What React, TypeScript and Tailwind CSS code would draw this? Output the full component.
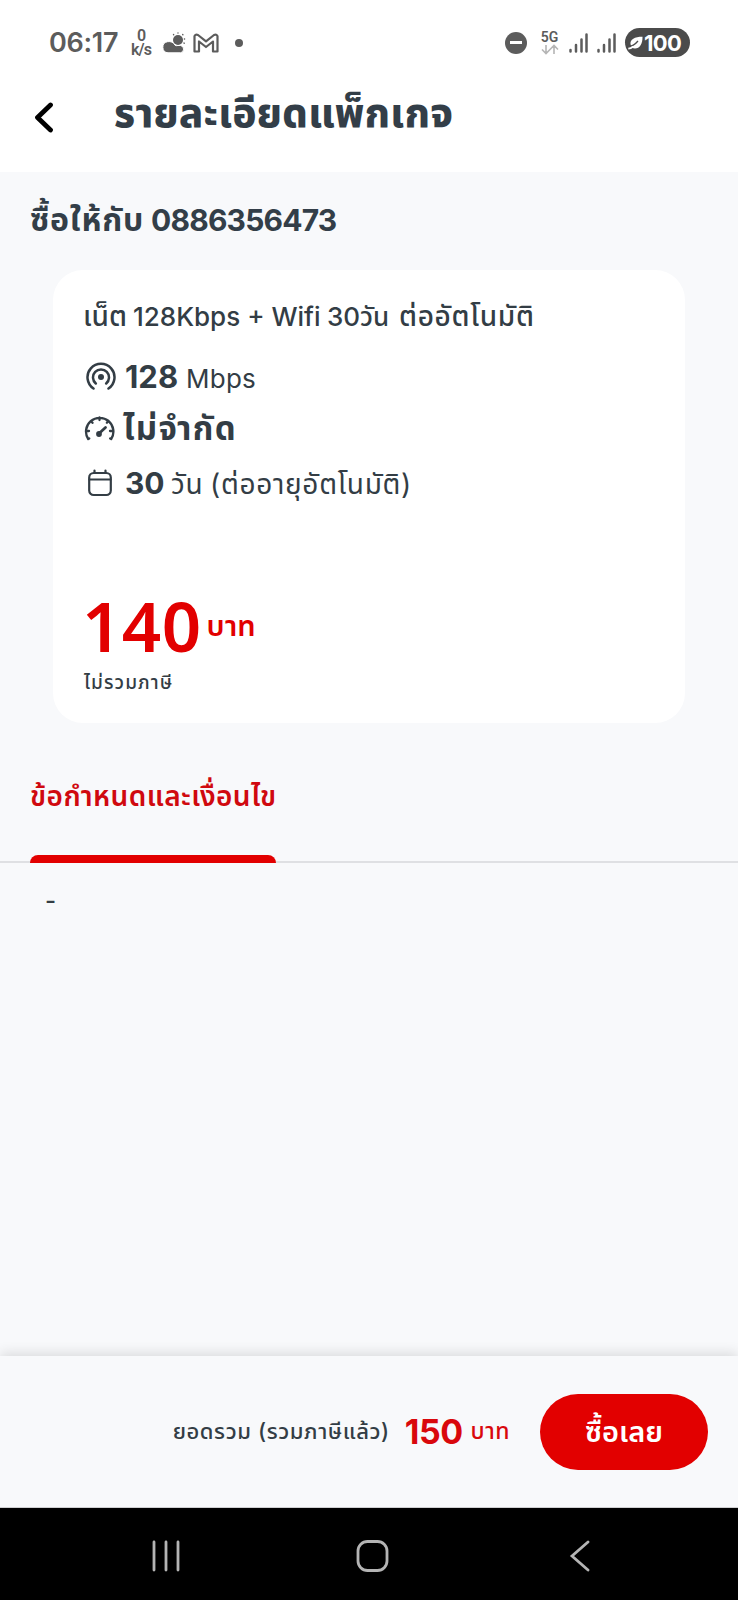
import React from "react";

function StatusBar() {
  return (
    <div className="flex h-[85px] items-center justify-between pl-[49px] pr-[48px] text-[#5c5c5c]">
      <div className="flex items-center">
        <span className="w-[69px] whitespace-nowrap text-[27px] font-semibold leading-[26px] tracking-[-0.3px]">06:17</span>
        <span className="ml-[13px] flex w-5 flex-col items-center font-['Roboto'] text-[16px] font-semibold leading-[14px] tracking-[-0.9px]">
          <span>0</span>
          <span>k/s</span>
        </span>
        <svg className="ml-[11px]" width="24" height="22" viewBox="0 0 24 22">
          <circle cx="16" cy="8" r="5" fill="#5c5c5c" />
          <g stroke="#5c5c5c" strokeWidth="1.400" strokeLinecap="round">
            <path d="M16 .9v.2M11.500 2.500l.2.2M20.700 2.500l.2.2M22.400 7h.2M22 11l.2.2" />
          </g>
          <path d="M6 20.800a5.600 5.600 0 0 1-.5-11.100a7 6.500 0 0 1 7.500 3.500q1 .8 3 .3h2.500a3.700 3.700 0 0 1 0 7.300z" fill="#5c5c5c" stroke="#fff" strokeWidth="1" />
        </svg>
        <svg className="ml-[7px]" width="26" height="20" viewBox="0 0 26 20" fill="none" stroke="#5c5c5c" strokeWidth="2.200" strokeLinejoin="round">
          <path d="M1.500 18.500V3.200Q2.500.8 5 2l8 6.300L21 2q2.500-1.200 3.500 1.200v15.300h-4.500V8.500l-7 5.500-7-5.500v10H1.500z" />
        </svg>
        <span className="ml-[16px] h-[8px] w-[8px] rounded-full bg-[#5c5c5c]" />
      </div>
      <div className="flex items-center">
        <span className="flex h-[22px] w-[22px] items-center justify-center rounded-full bg-[#5c5c5c]">
          <span className="h-[3px] w-[12px] bg-white" />
        </span>
        <div className="ml-[13px] flex w-[19px] flex-col items-center">
          <span className="font-['Roboto'] text-[14px] font-semibold leading-[13px]">5G</span>
          <svg width="18" height="11" viewBox="0 0 18 11" fill="none" stroke="#b5b5b5" strokeWidth="1.600">
            <path d="M5 1v8.500M1 5.500l4 4 4-4M13 10V1.500M9 5.500l4-4 4 4" />
          </svg>
        </div>
        <Signal className="ml-[10px]" />
        <Signal className="ml-[9px]" />
        <div className="ml-[9px] flex h-[29px] w-[65px] items-center rounded-full bg-[#4b4b4b] pl-[3px] text-white">
          <svg width="15" height="14" viewBox="0 0 15 14">
            <path d="M2.500 8C2 3.500 6.500.8 14.500.8 14.800 8 11.500 12.500 7 12.500 4.500 12.500 3 11 2.500 8z" fill="#fff" />
            <path d="M0 11C3.500 10.500 7 8.500 10 5" stroke="#4b4b4b" strokeWidth="1.300" fill="none" />
            <path d="M.3 12.700C2.500 12.500 4 11.500 5.500 10.500" stroke="#fff" strokeWidth="1.800" fill="none" />
          </svg>
          <span className="ml-[1px] text-[22px] font-bold leading-[22px] tracking-[-0.7px]">100</span>
        </div>
      </div>
    </div>
  );
}

function Signal({ className }: { className: string }) {
  return (
    <svg className={className} width="19" height="20" viewBox="0 0 19 20" stroke="#5c5c5c" strokeWidth="2.500" strokeLinecap="round">
      <path d="M1.500 17v1.500M7 12v6.500M12.500 6.500v12M17.500 1.500v17" />
    </svg>
  );
}

function Header() {
  return (
    <div className="flex h-[87px] items-start pl-[34px]">
      <svg className="mt-[17px]" width="20" height="31" viewBox="0 0 20 31" fill="none" stroke="#000" strokeWidth="4.800" strokeLinecap="round" strokeLinejoin="round">
        <path d="M16.500 3L3.500 15.500 16.500 28" />
      </svg>
      <h1 className="ml-[60px] mt-[4px] whitespace-nowrap text-[40px] font-extrabold leading-[48px] tracking-[0.3px] text-[#333e48]">รายละเอียดแพ็กเกจ</h1>
    </div>
  );
}

function PackageCard() {
  return (
    <section className="mx-[53px] h-[453px] rounded-[30px] bg-white px-[31px] text-[#333d45]">
      <h3 className="flex h-[66px] items-baseline whitespace-nowrap pt-[26px] text-[26px] font-medium leading-[40px]">
        <span className="-ml-px w-[50px] text-[28px]">เน็ต</span>
        <span className="w-[194px]">128Kbps + Wifi</span>
        <span className="w-[72px]">30วัน</span>
        <span className="text-[28px] tracking-[0.7px]">ต่ออัตโนมัติ</span>
      </h3>
      <div className="mt-[17px] flex h-[48px] items-center">
        <svg className="ml-[2px]" width="30" height="30" viewBox="0 0 30 30" fill="none" stroke="#333d45" strokeWidth="2.500" strokeLinecap="round">
          <path d="M7.500 26.500a13.500 13.500 0 1 1 15 0M9.800 21.500a8 8 0 1 1 10.400 0" />
          <circle cx="15" cy="15" r="3" fill="#333d45" stroke="none" />
        </svg>
        <p className="ml-[9px] flex items-baseline whitespace-nowrap">
          <b className="text-[31px] font-bold">128</b>
          <span className="ml-[8px] text-[26px] tracking-[0.2px]">Mbps</span>
        </p>
      </div>
      <div className="flex h-[55px] items-center">
        <svg className="-mt-[2px]" width="31" height="28" viewBox="0 0 31 28" fill="none" stroke="#333d45" strokeWidth="2.300" strokeLinecap="round">
          <path d="M4.200 25a13.700 13.700 0 1 1 23 0M15.500 3.500v2.500M7 7l1.500 1.800M24.500 6.800l-1.600 1.900M2.500 17h2.500M28.500 17H26M4.200 25l1-.6M27.200 25l-1-.6" />
          <path d="M15 19.500l6.500-6" strokeWidth="2.800" />
          <circle cx="15" cy="20" r="2.900" fill="#333d45" stroke="none" />
        </svg>
        <p className="ml-[8px] whitespace-nowrap text-[33px] font-bold tracking-[1.4px]">ไม่จำกัด</p>
      </div>
      <div className="flex h-[54px] items-center">
        <svg className="ml-[4px]" width="24" height="28" viewBox="0 0 24 28" fill="none" stroke="#333d45" strokeWidth="2.200" strokeLinecap="round">
          <rect x="1.200" y="4" width="21.600" height="22" rx="4.500" />
          <path d="M1.500 10.500h21M6.500 1.500V4M17.500 1.500V4" />
        </svg>
        <p className="ml-[13px] flex items-baseline whitespace-nowrap">
          <b className="w-[46px] text-[30px] font-bold">30</b>
          <span className="w-[39px] text-[28px] tracking-[0.8px]">วัน</span>
          <span className="text-[28px] tracking-[0.7px]">(ต่ออายุอัตโนมัติ)</span>
        </p>
      </div>
      <div className="mt-[70px] flex h-[91px] items-center whitespace-nowrap text-[#e20000]">
        <span className="-ml-[2px] -mt-[2px] font-['Noto_Sans'] text-[69px] font-semibold leading-[88px] tracking-[0.4px]">140</span>
        <span className="ml-[5px] text-[29px] font-semibold tracking-[0.2px]">บาท</span>
      </div>
      <p className="whitespace-nowrap text-[19px] font-medium leading-[24px] tracking-[1.1px]">ไม่รวมภาษี</p>
    </section>
  );
}

export default function App() {
  return (
    <div className="flex h-[1600px] w-[738px] flex-col overflow-hidden bg-[#f8f9fb] font-['Inter','Noto_Sans_Thai',sans-serif]">
      <header className="h-[172px] shrink-0 bg-white">
        <StatusBar />
        <Header />
      </header>
      <h2 className="flex h-[98px] items-baseline whitespace-nowrap pl-[30px] pt-[24px] text-[30px] font-bold leading-[48px] text-[#333e48]">
        <span className="w-[121px] text-[32px] tracking-[0.8px]">ซื้อให้กับ</span>
        <span className="tracking-[-0.8px]">0886356473</span>
      </h2>
      <PackageCard />
      <nav className="mt-[49px] flex h-[91px] border-b-2 border-[#dfe0e3] pl-[30px]">
        <div className="flex h-[91px] w-[246px] flex-col justify-between">
          <span className="whitespace-nowrap text-[28px] font-semibold leading-[48px] tracking-[0.45px] text-[#d0090f]">ข้อกำหนดและเงื่อนไข</span>
          <span className="h-[8px] rounded-t-[8px] bg-[#e20000]" />
        </div>
      </nav>
      <p className="pl-[45px] pt-[22px] text-[24px] font-medium leading-[32px] text-[#333d45]">-</p>
      <footer className="mt-auto flex h-[152px] shrink-0 items-center justify-end border-b border-[#cfcfd1] pr-[30px] shadow-[0_-3px_12px_rgba(0,0,0,0.12)]">
        <span className="whitespace-nowrap text-[22px] font-medium tracking-[0.6px] text-[#333d45]">ยอดรวม (รวมภาษีแล้ว)</span>
        <span className="ml-[15px] text-[34px] font-bold tracking-[-0.5px] text-[#d9080c]">150</span>
        <span className="ml-[8px] whitespace-nowrap text-[23px] font-medium tracking-[0.5px] text-[#d9080c]">บาท</span>
        <button className="ml-[30px] h-[76px] w-[168px] whitespace-nowrap rounded-full bg-[#e20000] text-[29px] font-semibold text-white">ซื้อเลย</button>
      </footer>
      <div className="flex h-[92px] shrink-0 items-center bg-black pl-[151px]">
        <svg className="mt-[3px]" width="440" height="34" viewBox="0 0 440 34" fill="none" stroke="#b4b4b4" strokeWidth="2.800" strokeLinecap="round">
          <path d="M3 3v28M15 3v28M27 3v28M437 3L421 17l16 14" />
          <rect x="207" y="2.500" width="29" height="29" rx="9.500" />
        </svg>
      </div>
    </div>
  );
}
